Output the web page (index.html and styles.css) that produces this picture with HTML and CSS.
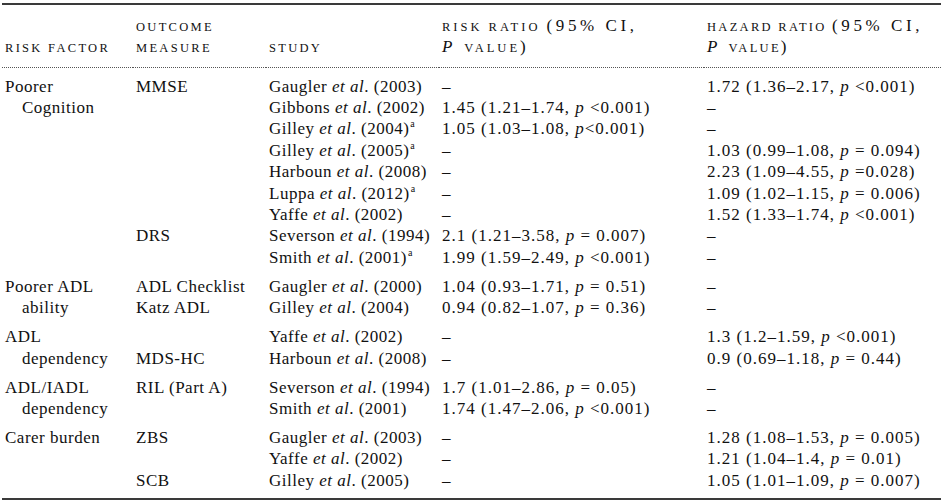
FILE: index.html
```html
<!DOCTYPE html>
<html>
<head>
<meta charset="utf-8">
<link rel="stylesheet" href="styles.css">
</head>
<body>
<table class="tbl">
  <colgroup>
    <col class="c1"><col class="c2"><col class="c3"><col class="c4"><col class="c5">
  </colgroup>
  <thead>
    <tr>
      <th>risk factor</th>
      <th>outcome<br>measure</th>
      <th>study</th>
      <th class="rr">risk ratio <span class="big">(95% CI,</span><br><i class="pv">P</i> value<span class="big">)</span></th>
      <th>hazard ratio <span class="big">(95% CI,</span><br><i class="pv">P</i> value<span class="big">)</span></th>
    </tr>
  </thead>
  <tbody>
    <tr class="first">
      <td rowspan="7" class="rf">Poorer<br>Cognition</td>
      <td rowspan="7">MMSE</td>
      <td>Gaugler <i>et al</i>. (2003)</td>
      <td>–</td>
      <td class="n">1.72 (1.36–2.17, <i>p</i> &lt;0.001)</td>
    </tr>
    <tr><td>Gibbons <i>et al</i>. (2002)</td><td class="n">1.45 (1.21–1.74, <i>p</i> &lt;0.001)</td><td>–</td></tr>
    <tr><td>Gilley <i>et al</i>. (2004)<sup>a</sup></td><td class="n">1.05 (1.03–1.08, <i>p</i>&lt;0.001)</td><td>–</td></tr>
    <tr><td>Gilley <i>et al</i>. (2005)<sup>a</sup></td><td>–</td><td class="n">1.03 (0.99–1.08, <i>p</i> = 0.094)</td></tr>
    <tr><td>Harboun <i>et al</i>. (2008)</td><td>–</td><td class="n">2.23 (1.09–4.55, <i>p</i> =0.028)</td></tr>
    <tr><td>Luppa <i>et al</i>. (2012)<sup>a</sup></td><td>–</td><td class="n">1.09 (1.02–1.15, <i>p</i> = 0.006)</td></tr>
    <tr><td>Yaffe <i>et al</i>. (2002)</td><td>–</td><td class="n">1.52 (1.33–1.74, <i>p</i> &lt;0.001)</td></tr>
    <tr>
      <td></td>
      <td>DRS</td>
      <td>Severson <i>et al</i>. (1994)</td>
      <td class="n">2.1 (1.21–3.58, <i>p</i> = 0.007)</td>
      <td>–</td>
    </tr>
    <tr><td></td><td></td><td>Smith <i>et al</i>. (2001)<sup>a</sup></td><td class="n">1.99 (1.59–2.49, <i>p</i> &lt;0.001)</td><td>–</td></tr>
  </tbody>
  <tbody>
    <tr class="first">
      <td rowspan="2" class="rf">Poorer ADL<br>ability</td>
      <td>ADL Checklist</td>
      <td>Gaugler <i>et al</i>. (2000)</td>
      <td class="n">1.04 (0.93–1.71, <i>p</i> = 0.51)</td>
      <td>–</td>
    </tr>
    <tr><td>Katz ADL</td><td>Gilley <i>et al</i>. (2004)</td><td class="n">0.94 (0.82–1.07, <i>p</i> = 0.36)</td><td>–</td></tr>
  </tbody>
  <tbody>
    <tr class="first">
      <td rowspan="2" class="rf">ADL<br>dependency</td>
      <td></td>
      <td>Yaffe <i>et al</i>. (2002)</td>
      <td>–</td>
      <td class="n">1.3 (1.2–1.59, <i>p</i> &lt;0.001)</td>
    </tr>
    <tr><td>MDS-HC</td><td>Harboun <i>et al</i>. (2008)</td><td>–</td><td class="n">0.9 (0.69–1.18, <i>p</i> = 0.44)</td></tr>
  </tbody>
  <tbody>
    <tr class="first">
      <td rowspan="2" class="rf">ADL/IADL<br>dependency</td>
      <td>RIL (Part A)</td>
      <td>Severson <i>et al</i>. (1994)</td>
      <td class="n">1.7 (1.01–2.86, <i>p</i> = 0.05)</td>
      <td>–</td>
    </tr>
    <tr><td></td><td>Smith <i>et al</i>. (2001)</td><td class="n">1.74 (1.47–2.06, <i>p</i> &lt;0.001)</td><td>–</td></tr>
  </tbody>
  <tbody class="last">
    <tr class="first">
      <td rowspan="3" class="rf">Carer burden</td>
      <td rowspan="2">ZBS</td>
      <td>Gaugler <i>et al</i>. (2003)</td>
      <td>–</td>
      <td class="n">1.28 (1.08–1.53, <i>p</i> = 0.005)</td>
    </tr>
    <tr><td>Yaffe <i>et al</i>. (2002)</td><td>–</td><td class="n">1.21 (1.04–1.4, <i>p</i> = 0.01)</td></tr>
    <tr><td>SCB</td><td>Gilley <i>et al</i>. (2005)</td><td>–</td><td class="n">1.05 (1.01–1.09, <i>p</i> = 0.007)</td></tr>
  </tbody>
</table>
</body>
</html>
```

FILE: styles.css
```css
html, body {
  margin: 0;
  padding: 0;
  background: #ffffff;
}

body {
  font-family: "Liberation Serif", "Times New Roman", serif;
  font-size: 17px;
  color: #111111;
}

.tbl {
  width: 939px;
  margin: 3px 0 0 2px;
  border-collapse: collapse;
  table-layout: fixed;
  border-top: 2px solid #3a3a3a;
  border-bottom: 2px solid #3a3a3a;
}

.c1 { width: 131px; }
.c2 { width: 133px; }
.c3 { width: 173px; }
.c4 { width: 265px; }
.c5 { width: auto; }

.tbl th {
  font-weight: normal;
  text-align: left;
  vertical-align: bottom;
  text-transform: uppercase;
  letter-spacing: 2.3px;
  font-size: 12.5px;
  line-height: 21px;
  padding: 12px 0 8px 3px;
  border-bottom: 1px dotted #555;
  white-space: nowrap;
}

.tbl th.rr {
  letter-spacing: 3px;
}

.tbl th .big {
  font-size: 17px;
  line-height: 1;
  letter-spacing: 3.6px;
}

.tbl th .pv {
  font-size: 17px;
  line-height: 1;
  letter-spacing: 0;
  margin-right: 6px;
}

.tbl td {
  padding: 0 0 0 3px;
  line-height: 21.4px;
  vertical-align: top;
  white-space: nowrap;
  letter-spacing: 0.5px;
}

.tbl td.n {
  letter-spacing: 1px;
}

.tbl tr.first td {
  padding-top: 7.6px;
}

.tbl tbody.last tr:last-child td {
  padding-bottom: 7px;
}

.tbl td.rf {
  padding-left: 20px;
  text-indent: -17px;
}

.tbl sup {
  font-size: 10px;
  line-height: 0;
  vertical-align: 7px;
  margin-left: 1px;
}
```
